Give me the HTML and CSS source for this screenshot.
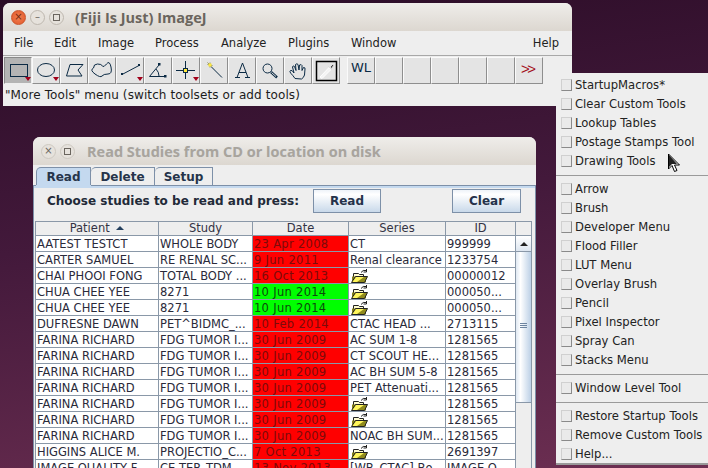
FILE: index.html
```html
<!DOCTYPE html>
<html lang="en">
<head>
<meta charset="utf-8">
<title>ImageJ</title>
<link rel="stylesheet" href="styles.css">
</head>
<body>
<svg class="defs" width="0" height="0"><defs>
<symbol id="folder" viewBox="0 0 17 14">
<path d="M2.500 11V4.500h5l1 1h4V11z" fill="#fffbd0" stroke="#222"/>
<path d="M1 13.500V7.500h14v6z" fill="#85801a"/>
<path d="M.5 13.500L4.500 7.500h12l-3 6z" fill="#8f8a1c" stroke="#222"/>
<path d="M1.500 13L5 8H13L6 13z" fill="#fff65c"/>
<path d="M10 3.500q2-3 5-2M15.500 0v3h-3" fill="none" stroke="#222"/>
</symbol>
</defs></svg>

<section class="window ij">
  <header class="titlebar">
    <div class="ctrls">
      <span class="ctrl close">×</span>
      <span class="ctrl">–</span>
      <span class="ctrl"><i class="sq"></i></span>
    </div>
    <span class="title">(Fiji Is Just) ImageJ</span>
  </header>
  <nav class="menubar">
    <span class="m-file">File</span><span class="m-edit">Edit</span><span class="m-image">Image</span><span class="m-process">Process</span><span class="m-analyze">Analyze</span><span class="m-plugins">Plugins</span><span class="m-window">Window</span><span class="m-help">Help</span>
  </nav>
  <div class="toolbar">
    <div class="tool active"><svg viewBox="0 0 28 28"><rect x="6.500" y="7.500" width="17" height="12" fill="none" stroke="#0b2a44"/></svg><i class="tri"></i></div>
    <div class="tool"><svg viewBox="0 0 28 28"><ellipse cx="14" cy="13" rx="8.500" ry="6.500" fill="none" stroke="#0b2a44"/></svg><i class="tri"></i></div>
    <div class="tool"><svg viewBox="0 0 28 28"><path d="M10 7.500h13l-5 5.500 4 6H6.500z" fill="none" stroke="#0b2a44"/></svg></div>
    <div class="tool"><svg viewBox="0 0 28 28"><path d="M5.500 11q0-4 4-4t5 2 4-2 4.500 3-3 7-6 2-7-2-1.500-6z" fill="none" stroke="#0b2a44"/></svg></div>
    <div class="tool"><svg viewBox="0 0 28 28"><path d="M6 17.500L23 8.500" stroke="#0b2a44"/><rect x="5" y="16" width="2" height="2" fill="#0b2a44"/><rect x="22" y="7" width="2" height="2" fill="#0b2a44"/></svg><i class="tri"></i></div>
    <div class="tool"><svg viewBox="0 0 28 28"><path d="M5.500 19.500L15 8M5.500 19.500H22" fill="none" stroke="#0b2a44"/><rect x="14" y="6" width="2.500" height="2.500" fill="#0b2a44"/><rect x="20" y="18" width="2.500" height="2.500" fill="#0b2a44"/><path d="M12 12q3 3 3 7" fill="none" stroke="#0b2a44"/></svg></div>
    <div class="tool"><svg viewBox="0 0 28 28"><path d="M13.500 4v18M4 13.500h19" stroke="#0b2a44"/><rect x="11.500" y="11.500" width="4" height="4" fill="#ffe93b" stroke="#0b2a44"/></svg><i class="tri"></i></div>
    <div class="tool"><svg viewBox="0 0 28 28"><path d="M11 9.500l11 11" stroke="#0b2a44"/><path d="M7.500 7.500l5 1M10 5.500l0 5M7.500 5.500l4 4" stroke="#8a8a60"/><rect x="8.500" y="6.500" width="3" height="3" fill="#ffe93b"/></svg></div>
    <div class="tool"><svg viewBox="0 0 28 28"><path d="M7 20.500h5M17 20.500h5M9 20.500L14.500 6l5.500 14.500M11 15.500h7" fill="none" stroke="#0b2a44"/></svg></div>
    <div class="tool"><svg viewBox="0 0 28 28"><circle cx="11.500" cy="11.500" r="4.500" fill="none" stroke="#0b2a44"/><path d="M15 15l6 5.500" stroke="#0b2a44" stroke-width="2.500"/><path d="M15.500 15.500l4.500 4" stroke="#ddd"/></svg></div>
    <div class="tool"><svg viewBox="0 0 28 28"><path d="M11 21.500q-2-3-4-5t-.5-3 3.500 2.500l-1.500-6q.5-2 2-.5l1.500 4-.5-6q1.500-1.500 2.500 0l1 5.500.5-5q2-1 2.500.5v5l1.500-3q2 0 1.500 1.500l-.5 6q-1 3-3 4z" fill="none" stroke="#0b2a44"/></svg></div>
    <div class="tool"><svg viewBox="0 0 28 28"><rect x="4.500" y="4.500" width="20" height="19" fill="none" stroke="#000" stroke-width="1.500"/><path d="M8 20l9-9.500 2 2-9 9z" fill="#f4f4f4" stroke="#fff"/><path d="M16 9l4 4M18 10l3-3 1 1-2.500 3.500z" fill="#444" stroke="#ddd"/></svg></div>
    <div class="tool gap wl">WL</div>
    <div class="tool"></div><div class="tool"></div><div class="tool"></div><div class="tool"></div><div class="tool"></div>
    <div class="tool more">&gt;&gt;</div>
  </div>
  <div class="status">"More Tools" menu (switch toolsets or add tools)</div>
</section>

<section class="window rs">
  <header class="titlebar">
    <div class="ctrls dim">
      <span class="ctrl">×</span>
      <span class="ctrl"><i class="sq"></i></span>
    </div>
    <span class="title">Read Studies from CD or location on disk</span>
  </header>
  <div class="tabs">
    <span class="tab on">Read</span><span class="tab t-del">Delete</span><span class="tab t-set">Setup</span>
  </div>
  <div class="panel">
    <div class="actions">
      <b class="prompt">Choose studies to be read and press:</b>
      <button class="btn read">Read</button>
      <button class="btn clear">Clear</button>
    </div>
    <div class="grid">
      <table>
        <colgroup><col class="c1"><col class="c2"><col class="c3"><col class="c4"><col class="c5"></colgroup>
        <thead><tr><th>Patient <i class="sort"></i></th><th>Study</th><th>Date</th><th>Series</th><th>ID</th></tr></thead>
        <tbody>
          <tr><td>AATEST TESTCT</td><td>WHOLE BODY</td><td class="red">23 Apr 2008</td><td>CT</td><td>999999</td></tr>
          <tr><td>CARTER SAMUEL</td><td>RE RENAL SC...</td><td class="red">9 Jun 2011</td><td>Renal clearance</td><td>1233754</td></tr>
          <tr><td>CHAI PHOOI FONG</td><td>TOTAL BODY ...</td><td class="red">16 Oct 2013</td><td><svg class="fold"><use href="#folder"/></svg></td><td>00000012</td></tr>
          <tr><td>CHUA CHEE YEE</td><td>8271</td><td class="green">10 Jun 2014</td><td><svg class="fold"><use href="#folder"/></svg></td><td>000050...</td></tr>
          <tr><td>CHUA CHEE YEE</td><td>8271</td><td class="green">10 Jun 2014</td><td><svg class="fold"><use href="#folder"/></svg></td><td>000050...</td></tr>
          <tr><td>DUFRESNE DAWN</td><td>PET^BIDMC_...</td><td class="red">10 Feb 2014</td><td>CTAC HEAD ...</td><td>2713115</td></tr>
          <tr><td>FARINA RICHARD</td><td>FDG TUMOR I...</td><td class="red">30 Jun 2009</td><td>AC SUM 1-8</td><td>1281565</td></tr>
          <tr><td>FARINA RICHARD</td><td>FDG TUMOR I...</td><td class="red">30 Jun 2009</td><td>CT SCOUT HE...</td><td>1281565</td></tr>
          <tr><td>FARINA RICHARD</td><td>FDG TUMOR I...</td><td class="red">30 Jun 2009</td><td>AC BH SUM 5-8</td><td>1281565</td></tr>
          <tr><td>FARINA RICHARD</td><td>FDG TUMOR I...</td><td class="red">30 Jun 2009</td><td>PET Attenuati...</td><td>1281565</td></tr>
          <tr><td>FARINA RICHARD</td><td>FDG TUMOR I...</td><td class="red">30 Jun 2009</td><td><svg class="fold"><use href="#folder"/></svg></td><td>1281565</td></tr>
          <tr><td>FARINA RICHARD</td><td>FDG TUMOR I...</td><td class="red">30 Jun 2009</td><td><svg class="fold"><use href="#folder"/></svg></td><td>1281565</td></tr>
          <tr><td>FARINA RICHARD</td><td>FDG TUMOR I...</td><td class="red">30 Jun 2009</td><td>NOAC BH SUM...</td><td>1281565</td></tr>
          <tr><td>HIGGINS ALICE M.</td><td>PROJECTIO_C...</td><td class="red">7 Oct 2013</td><td><svg class="fold"><use href="#folder"/></svg></td><td>2691397</td></tr>
          <tr><td>IMAGE QUALITY F...</td><td>CE TEP_TDM...</td><td class="red">13 Nov 2013</td><td>[WB_CTAC] Bo...</td><td>IMAGE Q...</td></tr>
        </tbody>
      </table>
      <div class="scrollbar">
        <div class="sb-head"></div>
        <div class="sb-up"><i class="up"></i></div>
        <div class="sb-thumb"><i></i><i></i><i></i></div>
      </div>
    </div>
  </div>
</section>

<aside class="popup">
  <ul>
    <li><i></i>StartupMacros*</li>
    <li><i></i>Clear Custom Tools</li>
    <li><i></i>Lookup Tables</li>
    <li><i></i>Postage Stamps Tool</li>
    <li><i></i>Drawing Tools</li>
  </ul>
  <ul>
    <li><i></i>Arrow</li>
    <li><i></i>Brush</li>
    <li><i></i>Developer Menu</li>
    <li><i></i>Flood Filler</li>
    <li><i></i>LUT Menu</li>
    <li><i></i>Overlay Brush</li>
    <li><i></i>Pencil</li>
    <li><i></i>Pixel Inspector</li>
    <li><i></i>Spray Can</li>
    <li><i></i>Stacks Menu</li>
  </ul>
  <ul>
    <li><i></i>Window Level Tool</li>
  </ul>
  <ul>
    <li><i></i>Restore Startup Tools</li>
    <li><i></i>Remove Custom Tools</li>
    <li><i></i>Help...</li>
  </ul>
</aside>

<svg class="cursor" width="14" height="20" viewBox="0 0 14 20"><path d="M1.500 1v15l3.500-3.500 2.500 6 2.500-1-2.500-5.500h5z" fill="#fff" stroke="#000"/><path d="M2 2v12l3-3 5 0z" fill="#222"/></svg>
</body>
</html>
```
FILE: styles.css
```css
* { box-sizing: border-box; }
html, body { margin: 0; height: 100%; }
body {
  position: relative;
  width: 708px; height: 468px; overflow: hidden;
  background: linear-gradient(172deg, #2a0c26 0%, #43193b 45%, #6d2f52 100%);
  font: 12px/16px "DejaVu Sans", sans-serif;
  color: #222;
}
.defs { position: absolute; }
.window { position: absolute; background: #eeeeee; border-radius: 7px 7px 0 0; overflow: hidden; }
.ij { left: 3px; top: 3px; width: 569px; height: 103px; }
.rs { left: 33px; top: 137px; width: 503px; height: 331px; }
.titlebar {
  height: 28px; display: flex; align-items: center;
  background: linear-gradient(#efedea, #dcd7d0);
}
.ctrls { display: flex; gap: 4px; margin-left: 8px; }
.ctrl {
  width: 15px; height: 15px; border-radius: 50%;
  border: 1px solid #bdb7ae; background: #e6e2dc; color: #6a655e;
  display: flex; align-items: center; justify-content: center;
  font-size: 10px; line-height: 1;
}
.ctrl.close { background: radial-gradient(#f08050, #e2572a); border-color: #c9552a; color: #7a2a10; }
.dim .ctrl { border-color: #cdc8c0; }
.sq { display: block; width: 7px; height: 7px; border: 1px solid #6a655e; }
.title { font: bold 14.500px "Open Sans", sans-serif; color: #6b655d; margin-left: 11px; }
.rs .ctrls { margin-left: 8px; }
.rs .title { color: #a9a49c; margin-left: 12px; text-shadow: 0 0 1px #cfd8e4; }

.menubar { height: 25px; display: flex; align-items: center; background: #eeeeee; padding-left: 11px; font-size: 11.500px; border-bottom: 1px solid #a8a8a8; }
.menubar span { display: block; }
.m-file { width: 40px; } .m-edit { width: 44px; } .m-image { width: 57px; } .m-process { width: 66px; } .m-analyze { width: 67px; } .m-plugins { width: 63px; } .m-window { flex: 1; }
.m-help { margin-right: 13px; }

.toolbar { height: 29px; display: flex; background: #eeeeee; padding: 1px 0 0 1px; }
.tool {
  width: 28px; height: 27px; flex: none; background: #e4e4e4;
  border: 1px solid; border-color: #fafafa #8e8e8e #8e8e8e #fafafa;
  position: relative; font-size: 12px;
}
.tool svg { display: block; position: absolute; left: -1px; top: -1px; width: 28px; height: 28px; }
.tool.active { background: #b4b4b4; border-color: #8a8a8a #eeeeee #eeeeee #8a8a8a; }
.tool .tri { position: absolute; right: 0; bottom: 2px; border: 3px solid transparent; border-top: 4px solid #a1001a; border-bottom: 0; width: 0; height: 0; }
.tool.gap { margin-left: 7px; }
.wl { font-size: 13px; color: #0b2a44; padding: 2px 0 0 3px; }
.more { color: #a30f1b; font: 15px/18px "Liberation Sans", sans-serif; padding: 2px 0 0 5px; letter-spacing: -2.500px; }
.status { height: 21px; padding-left: 2px; font-size: 12px; line-height: 20px; letter-spacing: .1px; background: #eeeeee; color: #1c1c1c; }

.tabs { height: 20px; display: flex; padding: 0 0 0 3px; background: #eeeeee; align-items: flex-end; font-weight: bold; font-size: 12px; position: relative; z-index: 1; }
.tab { height: 18px; width: 64px; text-align: center; padding-top: 1px; border: 1px solid #7d90a8; border-bottom: 0; border-left-width: 0; border-radius: 5px 0 0 0; color: #26344a; background: #eeeeee; }
.tab.on { width: 55px; background: #c4d9ef; height: 18px; border-left-width: 1px; box-shadow: 0 2px 0 #c4d9ef; }
.t-set { width: 58px; }
.panel { height: 283px; border: 1px solid #7d90a8; border-bottom: 0; background: #eeeeee; box-shadow: inset 0 2px 0 #c4d9ef; padding: 2px 2px 0 1px; overflow: hidden; }
.actions { height: 33px; display: flex; align-items: center; padding: 0 0 7px 12px; }
.prompt { color: #222a38; font-size: 12px; }
.btn {
  font: bold 12px "DejaVu Sans", sans-serif; color: #25324a;
  height: 24px; border: 1px solid #7d90a8; flex: none;
  background: linear-gradient(#eef3f9, #ffffff 20%, #c9d9ea);
  padding: 0;
}
.read { width: 68px; margin-left: 14px; }
.clear { width: 69px; margin-left: 71px; }
.grid { display: flex; align-items: flex-start; }
table { border-collapse: collapse; table-layout: fixed; width: 481px; background: #fff; color: #2a2a3a; font-size: 11.500px; }
.c1 { width: 123px; } .c2 { width: 94px; } .c3 { width: 96px; } .c4 { width: 97px; } .c5 { width: 70px; }
th { height: 14px; background: #eeeeee; font-weight: normal; text-align: center; border: 1px solid #8a98a8; padding: 0; line-height: 13px; color: #334; }
td { height: 16px; border: 1px solid #8a98a8; padding: 0 0 0 1px; white-space: nowrap; overflow: hidden; line-height: 14px; }
td.red { background: #ff0000; color: #7c0b0b; letter-spacing: .3px; }
td.green { background: #00ff00; color: #0c4a0c; letter-spacing: .3px; }
.sort { display: inline-block; width: 0; height: 0; border: 4px solid transparent; border-top: 0; border-bottom: 4px solid #24405e; margin: 0 0 2px 3px; }
.fold { display: block; width: 17px; height: 14px; margin-left: 1px; }
.scrollbar { width: 16px; background: #eeeeee; flex: none; height: 300px; border-right: 1px solid #8a98a8; }
.sb-head { height: 15px; border-top: 1px solid #8a98a8; border-bottom: 1px solid #8a98a8; }
.sb-up { height: 16px; background: linear-gradient(#fff,#dde6f0); border-bottom: 1px solid #8a98a8; display: flex; align-items: center; justify-content: center; }
.up { width: 0; height: 0; border: 4px solid transparent; border-top: 0; border-bottom: 4px solid #222; }
.sb-thumb { height: 151px; border-bottom: 1px solid #8a98a8; background: linear-gradient(90deg,#e0e9f3,#fff 30%,#bcd0e6); display: flex; flex-direction: column; align-items: center; justify-content: center; gap: 1px; padding-bottom: 3px; }
.sb-thumb i { display: block; width: 7px; height: 1px; background: #6d84a0; }

.popup { position: absolute; left: 556px; top: 73px; width: 152px; height: 392px; background: #eeeeee; border-bottom: 2px solid #9a9a9a; padding: 2px 0 0 0; }
.popup ul { list-style: none; margin: 0 0 3px; padding: 0 0 5px; border-bottom: 1px solid #9a9a9a; }
.popup ul:last-child { border: 0; }
.popup li { height: 19px; display: flex; align-items: center; font-size: 11.600px; color: #222; padding-left: 5px; }
.popup li i { display: block; width: 11px; height: 12px; margin-right: 3px; border: 1px solid; border-color: #d0d0d0 #8a8a8a #8a8a8a #d0d0d0; background: #eaeaea; }
.cursor { position: absolute; left: 667px; top: 153px; }
```
